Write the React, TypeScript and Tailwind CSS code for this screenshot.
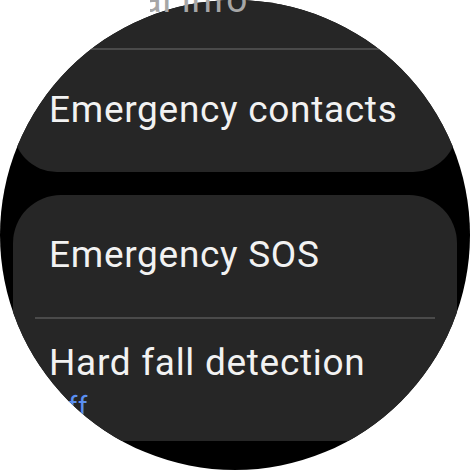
import React from "react";

const font = { fontFamily: "Roboto, 'Noto Sans', sans-serif" };

function Row({ title, sub }: { title: string; sub?: string }) {
  if (sub) {
    return (
      <div className="flex h-[122px] flex-col pl-[36px] pt-[22px]">
        <p className="text-[37px] leading-[44px] tracking-[0.7px] text-[#f2f2f2]">{title}</p>
        <p className="mt-[7px] text-[27px] leading-[30px] tracking-[0.5px] text-[#5b8ff0]">{sub}</p>
      </div>
    );
  }
  return (
    <div className="flex h-[122px] flex-col justify-center pl-[36px]">
      <p className="-mt-[2px] text-[37px] leading-[44px] tracking-[0.7px] text-[#f2f2f2]">{title}</p>
    </div>
  );
}

function Divider() {
  return <div className="mx-[22px] h-[2px] bg-[#4a4a4a]" />;
}

export default function App() {
  return (
    <div className="relative h-[470px] w-[470px] bg-white" style={font}>
      <div className="h-[470px] w-[470px] overflow-hidden rounded-full bg-black">
        <div className="h-[447px] overflow-hidden">
          <div className="flex flex-col gap-[23px]">
            <div className="-mt-[74px] mx-[13px] rounded-b-[44px] bg-[#262626]">
              <div className="h-[122px]" />
              <Divider />
              <Row title="Emergency contacts" />
            </div>
            <div className="mx-[13px] rounded-t-[48px] bg-[#262626]">
              <Row title="Emergency SOS" />
              <Divider />
              <Row title="Hard fall detection" sub="Off" />
            </div>
          </div>
        </div>
      </div>

      {/* previous row's label, scrolled off the top edge */}
      <div className="absolute left-[150px] top-[-22px] flex h-[44px] w-[98px] justify-end overflow-hidden">
        <span className="whitespace-nowrap text-[37px] leading-[44px] tracking-[0.7px] text-[#a6a6a6]">Medical info</span>
      </div>
    </div>
  );
}
